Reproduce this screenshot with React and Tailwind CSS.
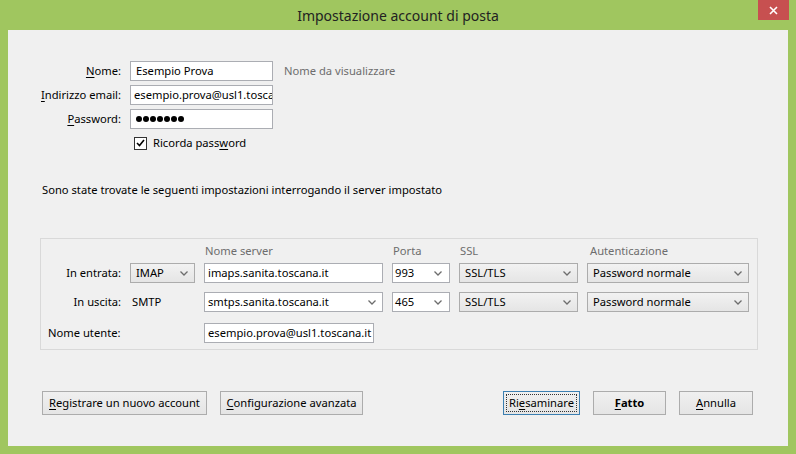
import React from 'react';

const font = { fontFamily: '"Noto Sans", "Open Sans", sans-serif' };

// little "v" used by drop-down boxes
function Chevron() {
  return (
    <svg width="8" height="5" viewBox="0 0 8 5" className="shrink-0">
      <polyline points="0.5,0.5 4,4 7.5,0.5" fill="none" stroke="#6d6d6d" strokeWidth="1.3" />
    </svg>
  );
}

function TextBox({ value, className = '' }) {
  return (
    <div className={`h-[20px] bg-white border border-[#abadb3] flex items-center pl-[3px] overflow-hidden whitespace-nowrap ${className}`}>
      {value}
    </div>
  );
}

function Select({ value, white, pad = 'pl-[5px]', className = '' }) {
  return (
    <div
      className={`h-[20px] border flex items-center justify-between pr-[6px] whitespace-nowrap ${pad} ${
        white ? 'bg-white border-[#abadb3]' : 'bg-gradient-to-b from-[#f2f2f2] to-[#e5e5e5] border-[#acacac]'
      } ${className}`}
    >
      <span>{value}</span>
      <Chevron />
    </div>
  );
}

function Btn({ children, className = '', focused, bold }) {
  return (
    <div
      className={`h-[24px] flex items-center justify-center bg-gradient-to-b from-[#f0f0f0] to-[#e5e5e5] border ${
        focused ? 'border-[#3c7fb1]' : 'border-[#acacac]'
      } ${bold ? 'font-bold' : ''} ${className}`}
    >
      {focused ? (
        <span className="border border-dotted border-[#333] px-[2px] leading-[16px]">{children}</span>
      ) : (
        children
      )}
    </div>
  );
}

const u = (ch) => <span className="underline underline-offset-2">{ch}</span>;

const cols = 'grid grid-cols-[80px_65px_179px_58px_119px_162px] gap-x-[9px] items-center';

export default function App() {
  return (
    <div className="w-[796px] h-[454px] bg-[#a0c65f] flex flex-col text-[11.2px] text-black" style={font}>
      {/* title bar */}
      <div className="relative h-[30px] flex items-center justify-center text-[14px] text-[#222]">
        Impostazione account di posta
        <div className="absolute right-[7px] top-0 w-[31px] h-[20px] bg-[#c75050] flex items-center justify-center">
          <svg width="9" height="9" viewBox="0 0 9 9">
            <path d="M1 1 L8 8 M8 1 L1 8" stroke="#fff" strokeWidth="1.6" />
          </svg>
        </div>
      </div>

      <div className="mx-[8px] mb-[8px] flex-1 bg-[#f0f0f0] flex flex-col">
        {/* account fields */}
        <div className="pt-[31px] grid grid-cols-[113px_143px_auto] gap-x-[9px] gap-y-[4px] items-center">
          <div className="text-right">{u('N')}ome:</div>
          <TextBox value="Esempio Prova" className="pl-[5px]" />
          <div className="ml-[2px] text-[#6d6d6d]">Nome da visualizzare</div>

          <div className="text-right">{u('I')}ndirizzo email:</div>
          <TextBox value="esempio.prova@usl1.toscana.it" />
          <div />

          <div className="text-right">{u('P')}assword:</div>
          <div className="h-[20px] bg-white border border-[#abadb3] flex items-center gap-[1px] pl-[5px]">
            {[0, 1, 2, 3, 4, 5, 6].map((i) => (
              <div key={i} className="w-[6px] h-[6px] rounded-full bg-black" />
            ))}
          </div>
          <div />
        </div>

        <div className="mt-[6px] ml-[126px] h-[16px] flex items-center">
          <div className="w-[13px] h-[13px] bg-white border border-[#333] flex items-center justify-center">
            <svg width="9" height="8" viewBox="0 0 9 8">
              <polyline points="1,4 3.5,6.5 8,1" fill="none" stroke="#000" strokeWidth="1.6" />
            </svg>
          </div>
          <span className="ml-[6px]">Ricorda pass{u('w')}ord</span>
        </div>

        <div className="mt-[31px] pl-[34px] h-[16px] flex items-center">
          Sono state trovate le seguenti impostazioni interrogando il server impostato
        </div>

        {/* server settings group */}
        <div className="mt-[40px] ml-[32px] w-[718px] h-[112px] border border-[#d9d9d9] flex flex-col">
          <div className={`${cols} mt-[4px] h-[16px] text-[#6d6d6d]`}>
            <div />
            <div />
            <div className="pl-[1px]">Nome server</div>
            <div className="pl-[1px]">Porta</div>
            <div className="pl-[1px]">SSL</div>
            <div className="pl-[3px]">Autenticazione</div>
          </div>

          <div className={`${cols} mt-[4px]`}>
            <div className="text-right">In entrata:</div>
            <Select value="IMAP" />
            <TextBox value="imaps.sanita.toscana.it" />
            <Select value="993" white pad="pl-[2px]" className="pr-[7px]" />
            <Select value="SSL/TLS" />
            <Select value="Password normale" />
          </div>

          <div className={`${cols} mt-[9px]`}>
            <div className="text-right">In uscita:</div>
            <div className="pl-[2px]">SMTP</div>
            <Select value="smtps.sanita.toscana.it" white pad="pl-[3px]" />
            <Select value="465" white pad="pl-[2px]" className="pr-[7px]" />
            <Select value="SSL/TLS" />
            <Select value="Password normale" />
          </div>

          <div className="grid grid-cols-[154px_170px] gap-x-[9px] items-center mt-[11px]">
            <div className="pl-[7px]">Nome utente:</div>
            <TextBox value="esempio.prova@usl1.toscana.it" />
          </div>
        </div>

        {/* dialog buttons */}
        <div className="mt-[41px] pl-[34px] pr-[35px] flex items-center justify-between">
          <div className="flex gap-[13px]">
            <Btn className="w-[165px]">{u('R')}egistrare un nuovo account</Btn>
            <Btn className="w-[143px]">{u('C')}onfigurazione avanzata</Btn>
          </div>
          <div className="flex gap-[13px]">
            <Btn className="w-[77px]" focused>Ri{u('e')}saminare</Btn>
            <Btn className="w-[73px]" bold>{u('F')}atto</Btn>
            <Btn className="w-[74px]">{u('A')}nnulla</Btn>
          </div>
        </div>
      </div>
    </div>
  );
}
